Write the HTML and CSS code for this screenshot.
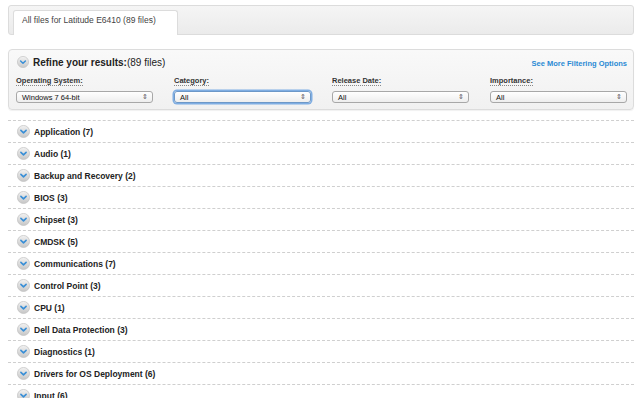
FILE: index.html
```html
<!DOCTYPE html>
<html>
<head>
<meta charset="utf-8">
<link rel="stylesheet" href="styles.css">
</head>
<body>
<div class="page">
  <div class="tabs">
    <div class="tab">All files for Latitude E6410 (89 files)</div>
  </div>

  <div class="panel">
    <div class="panel-head">
      <div class="title">
        <svg class="chev" viewBox="0 0 12 12"><defs><linearGradient id="g0" x1="0" y1="0" x2="0" y2="1"><stop offset="0" stop-color="#f2f2f2"/><stop offset="1" stop-color="#c9c9c9"/></linearGradient></defs><circle cx="6" cy="6" r="5.6" fill="url(#g0)" stroke="#bdbdbd" stroke-width="0.6"/><path d="M3.6 5 L6 7.3 L8.4 5" fill="none" stroke="#3a8fd6" stroke-width="1.5" stroke-linecap="round" stroke-linejoin="round"/></svg>
        <span class="title-b">Refine your results:</span><span class="title-n">(89 files)</span>
      </div>
      <a class="more">See More Filtering Options</a>
    </div>
    <div class="filters">
      <div class="filter">
        <span class="label">Operating System:</span>
        <div class="sel"><span>Windows 7 64-bit</span><span class="arr">&#8661;</span></div>
      </div>
      <div class="filter">
        <span class="label">Category:</span>
        <div class="sel focus"><span>All</span><span class="arr">&#8661;</span></div>
      </div>
      <div class="filter">
        <span class="label">Release Date:</span>
        <div class="sel"><span>All</span><span class="arr">&#8661;</span></div>
      </div>
      <div class="filter">
        <span class="label">Importance:</span>
        <div class="sel"><span>All</span><span class="arr">&#8661;</span></div>
      </div>
    </div>
  </div>

  <div class="list" id="list"></div>
</div>
<script>
  var items = ["Application (7)","Audio (1)","Backup and Recovery (2)","BIOS (3)","Chipset (3)","CMDSK (5)","Communications (7)","Control Point (3)","CPU (1)","Dell Data Protection (3)","Diagnostics (1)","Drivers for OS Deployment (6)","Input (6)"];
  var icon = '<svg class="chev big" viewBox="0 0 12 12"><defs><linearGradient id="gX" x1="0" y1="0" x2="0" y2="1"><stop offset="0" stop-color="#f2f2f2"/><stop offset="1" stop-color="#c6c6c6"/></linearGradient></defs><circle cx="6" cy="6" r="5.6" fill="url(#gX)" stroke="#bdbdbd" stroke-width="0.6"/><path d="M3.6 5 L6 7.3 L8.4 5" fill="none" stroke="#3a8fd6" stroke-width="1.5" stroke-linecap="round" stroke-linejoin="round"/></svg>';
  var html = "";
  items.forEach(function (t, i) {
    html += '<div class="row">' + icon.replace(/gX/g, "g" + (i + 1)) + '<span>' + t + '</span></div>';
  });
  document.getElementById("list").innerHTML = html;
</script>
</body>
</html>
```

FILE: styles.css
```css
html, body {
  margin: 0;
  padding: 0;
  background: #fff;
}
body {
  font-family: "Liberation Sans", Arial, sans-serif;
  color: #333;
  overflow: hidden;
}
.page {
  padding: 5px 6px 0 8px;
}
.tabs {
  box-sizing: border-box;
  height: 30px;
  border: 1px solid #dcdcdc;
  border-radius: 3px;
  background: linear-gradient(#f5f5f5, #ebebeb);
  padding: 4px 0 0 4px;
  display: flex;
  align-items: flex-end;
}
.tab {
  box-sizing: border-box;
  width: 165px;
  height: 25px;
  background: #fff;
  border: 1px solid #dcdcdc;
  border-bottom: none;
  border-radius: 3px 3px 0 0;
  font-size: 8.5px;
  color: #444;
  padding-left: 8px;
  line-height: 18px;
  margin-bottom: -1px;
}
.panel {
  box-sizing: border-box;
  margin-top: 14px;
  height: 61px;
  border: 1px solid #dcdcdc;
  border-radius: 4px;
  background: linear-gradient(#f9f9f9, #f1f1f1);
  padding: 5px 6px;
  box-shadow: 0 1px 1px rgba(0,0,0,0.06);
}
.panel-head {
  display: flex;
  justify-content: space-between;
  align-items: center;
  height: 14px;
  padding-left: 2px;
}
.title {
  display: flex;
  align-items: center;
  gap: 4px;
  font-size: 10px;
  color: #222;
}
.title-b { font-weight: bold; margin-right: -4px; }
.chev {
  width: 12px;
  height: 12px;
  flex: none;
}
.chev.big {
  width: 13px;
  height: 13px;
}
.more {
  font-size: 7.5px;
  color: #2a8ad4;
  font-weight: bold;
  padding-top: 2px;
}
.filters {
  display: grid;
  grid-template-columns: repeat(4, 158px);
  margin-top: 7px;
  padding-left: 1px;
}
.filter {
  display: flex;
  flex-direction: column;
  align-items: flex-start;
  gap: 5px;
}
.label {
  font-size: 7.5px;
  font-weight: bold;
  color: #333;
  border-bottom: 1px dotted #888;
  line-height: 9px;
}
.sel {
  box-sizing: border-box;
  width: 137px;
  height: 12px;
  border: 1px solid #a8a8a8;
  border-radius: 3px;
  background: linear-gradient(#ffffff, #eeeeee);
  display: flex;
  justify-content: space-between;
  align-items: center;
  padding: 0 4px 0 5px;
  font-size: 7.5px;
  color: #111;
}
.sel.focus {
  box-shadow: 0 0 0 1.5px #7faee3;
  border-color: #6d98c8;
}
.arr {
  font-size: 7px;
  color: #555;
}
.list {
  margin-top: 10px;
  border-top: 1px dashed #cfcfcf;
}
.row {
  height: 21px;
  border-bottom: 1px dashed #cfcfcf;
  display: flex;
  align-items: center;
  gap: 4px;
  padding-left: 9px;
  font-size: 8.5px;
  font-weight: bold;
  color: #222;
}
```
